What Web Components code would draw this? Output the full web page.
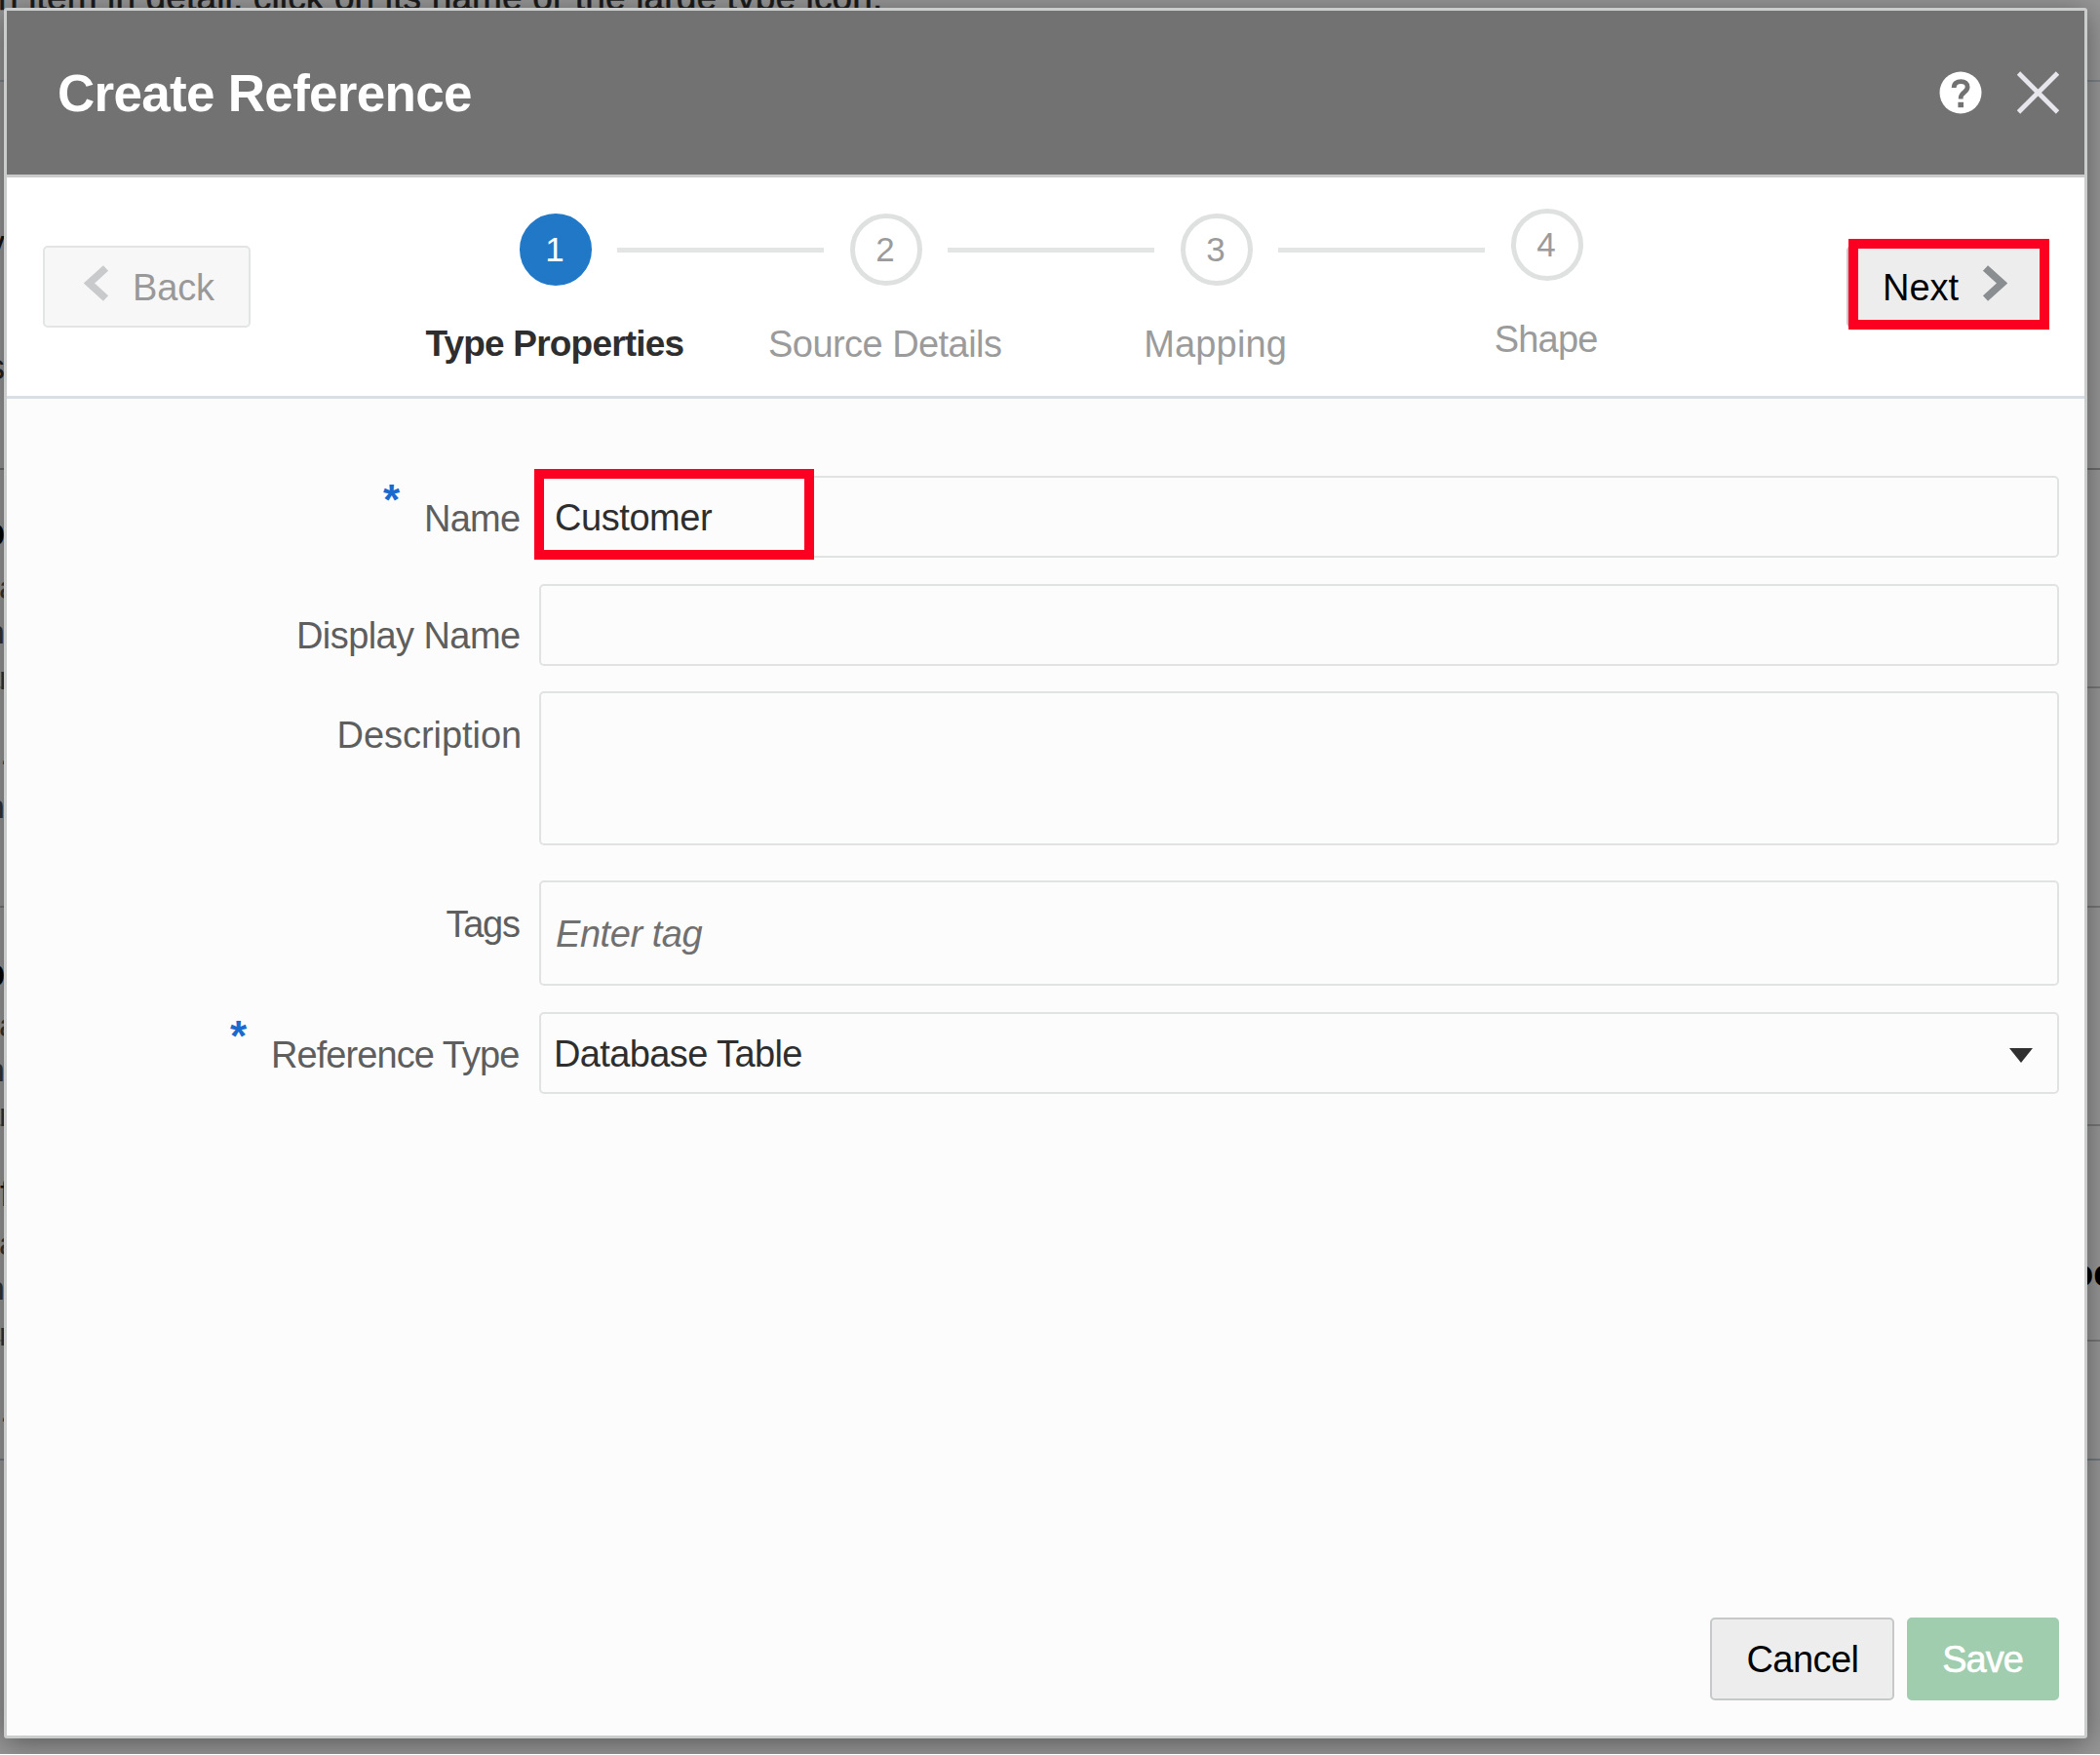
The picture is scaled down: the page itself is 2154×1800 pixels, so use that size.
<!DOCTYPE html>
<html lang="en">
<head>
<meta charset="utf-8">
<title>Create Reference</title>
<style>
html,body{margin:0;background:#fff;overflow:hidden}
body{font-family:"Liberation Sans",Arial,sans-serif;font-size:38px;line-height:44px;color:#5e5e5e}
</style>
</head>
<body>
<create-reference-page></create-reference-page>
<script>
const define = (name, html, setup) => customElements.define(name, class extends HTMLElement {
  connectedCallback() {
    if (this.shadowRoot) return;
    this.attachShadow({mode: 'open'}).innerHTML = typeof html === 'function' ? html(this) : html;
    if (setup) setup(this);
  }
});

// A single line of text whose box is its ink box; tracking is adjusted to the given width.
define('fit-text', '<style>:host{display:inline-block;white-space:pre;line-height:46px;height:44px;flex:none;text-align:left}span{display:block}</style><span></span>', el => {
  const span = el.shadowRoot.querySelector('span'), text = el.getAttribute('text');
  span.textContent = text;
  const cs = getComputedStyle(el), ctx = document.createElement('canvas').getContext('2d');
  ctx.font = `${cs.fontStyle} ${cs.fontWeight} ${cs.fontSize} ${cs.fontFamily}`;
  const m = ctx.measureText(text), w = +el.getAttribute('w');
  const ink = m.actualBoundingBoxRight + m.actualBoundingBoxLeft;
  if (text.length > 1) span.style.letterSpacing = ((w - ink) / (text.length - 1)).toFixed(3) + 'px';
  span.style.marginLeft = m.actualBoundingBoxLeft + 'px';
  el.style.width = w + 'px';
});

define('dimmed-page', () => {
  const rules = [[82,'#7a8288'],[480,'#6c6c6c'],[704,'#777'],[929,'#777'],[1153,'#777'],[1374,'#777'],[1496,'#727a80']];
  const bits = [['y',-14,263,38,0,'#111'],['s',-13,389,36,0,'#222'],['p',-18,559,38,1,'#000'],['a',-1,614,34,0,'#333'],['n',-14,660,34,0,'#333'],['r',-1,707,34,0,'#333'],['.',0,784,34,0,'#333'],
    ['n',-14,839,34,0,'#333'],['p',-18,1011,38,1,'#000'],['a',-1,1063,34,0,'#333'],['n',-14,1109,34,0,'#333'],['r',-1,1155,34,0,'#333'],['f',0,1237,38,0,'#111'],['a',-1,1287,34,0,'#333'],['n',-14,1333,34,0,'#333'],['r',-1,1380,34,0,'#333'],['.',0,1458,34,0,'#333'],
    ['oc',2124,1319,38,1,'#000']];
  return `<style>:host{display:block;position:relative;width:2154px;height:1799px;background:#979797;overflow:hidden}
  i,b{position:absolute;font-style:normal;font-weight:normal}i{left:0;right:0;height:2px}b{line-height:40px;white-space:nowrap}
  fit-text{position:absolute;left:0;top:-25px;font-size:37px;color:#1b1b1b;-webkit-text-stroke:.5px #1b1b1b}</style>
  ${rules.map(r => `<i style="top:${r[0]}px;background:${r[1]}"></i>`).join('')}
  ${bits.map(([t,x,y,s,w,c]) => `<b style="left:${x}px;top:${y-20-Math.round(s*.3465)}px;font-size:${s}px;font-weight:${w?700:400};color:${c}">${t}</b>`).join('')}
  <fit-text text="n item in detail, click on its name or the large type icon." w="902"></fit-text><slot></slot>`;
});

define('dialog-header', `<style>:host{display:flex;height:168px;background:#727272;border-bottom:3px solid #cbcbcb;color:#fff;align-items:center;padding:0 26px 0 54px;flex:none}
fit-text{font-size:53px;font-weight:700}
svg{display:block;flex:none}.q{margin-left:auto;margin-right:36px}</style>
<fit-text text="Create Reference" w="422"></fit-text>
<svg class="q" width="44" height="44" viewBox="0 0 44 44"><circle cx="22" cy="22" r="21.5" fill="#fff"/><path d="M15.2 17c0-4.3 2.9-6.4 7.1-6.4s6.8 2.2 6.8 5.7c0 5.3-6.9 5.2-6.9 11v1.2" fill="none" stroke="#727272" stroke-width="4.8"/><rect x="19.4" y="31.8" width="5.6" height="5.4" fill="#727272"/></svg>
<svg width="43" height="44" viewBox="0 0 43 44"><path d="M1.5 2 41.5 42M41.5 2 1.5 42" stroke="#e6e6ec" stroke-width="4.8"/></svg>`);

define('push-button', `<style>:host{display:flex;box-sizing:border-box;height:84px;border:2px solid var(--edge,#c6c9ca);border-radius:5px;background:var(--fill,#ededed);color:#000;position:relative;flex:none;align-items:flex-start}</style><slot></slot>`);

define('chevron-icon', el => `<style>:host{display:block;flex:none}svg{display:block}</style><svg width="26" height="37" viewBox="0 0 26 37"><path d="${el.hasAttribute('left') ? 'M22.5 3 5.5 18.5 22.5 34' : 'M3.5 3 20.5 18.5 3.5 34'}" fill="none" stroke="currentColor" stroke-width="7.6"/></svg>`);

define('highlight-box', `<style>:host{display:block;position:absolute;box-sizing:border-box;border:10px solid #fb0020;height:93px}</style>`);

define('step-train', () => {
  const steps = [['Type Properties',265],['Source Details',238],['Mapping',141.5],['Shape',104.5]];
  return `<style>:host{display:block;width:1356px;color:#9b9b9b;flex:none}
  .track{display:flex;padding:31.5px 0 0 132.5px;height:78.5px}
  .dot{box-sizing:border-box;width:74px;height:74px;margin-top:5px;border:5px solid #dfe1e0;border-radius:50%;display:flex;align-items:center;justify-content:center;font-size:35px;padding-right:2px;flex:none}
  .dot.on{background:#2078c6;border-color:#2078c6;color:#fff}
  .bar{width:212px;height:5px;background:#e3e5e4;margin:40px 27px 0 26px;flex:none}
  .names{display:flex;margin:33px 0 0 -1px}.names div{width:339px;display:flex;justify-content:center;padding-top:5px}
  .names div:first-child{color:#2e2e2e;font-weight:700;font-size:37px}.names div:last-child{padding-top:0}.dot:last-child{margin-top:0}</style>
  <div class="track">${steps.map((s,i) => `${i ? '<div class="bar"></div>' : ''}<div class="dot${i ? '' : ' on'}">${i+1}</div>`).join('')}</div>
  <div class="names">${steps.map(s => `<div><fit-text text="${s[0]}" w="${s[1]}"></fit-text></div>`).join('')}</div>`;
});

define('wizard-bar', `<style>:host{display:flex;height:224px;background:#fff;border-bottom:3px solid #d7e0e7;align-items:flex-start;padding-left:37px;flex:none}
.back{width:213px;margin:70px 143.5px 0 0;--fill:#f7f7f7;--edge:#e2e5e4}.back chevron-icon{margin:18px 27px 0 40px;color:#c8cacb}.back fit-text{margin-top:18px;color:#999}
.next{width:207px;margin:70px 0 0 137.5px}.next fit-text{margin:18px 23px 0 38px}.next chevron-icon{margin-top:18px;color:#8a8e90}
highlight-box{left:0;top:-9px;width:206px}</style>
<push-button class="back"><chevron-icon left></chevron-icon><fit-text text="Back" w="82"></fit-text></push-button>
<step-train></step-train>
<push-button class="next"><fit-text text="Next" w="75.5"></fit-text><chevron-icon></chevron-icon><highlight-box></highlight-box></push-button>`);

define('form-row', el => {
  const a = n => el.getAttribute(n);
  return `<style>:host{display:flex;gap:20px;height:${a('h')}px;margin-bottom:${a('gap')}px}
  .label{width:526px;display:flex;justify-content:flex-end;padding-top:${a('lt')}px;box-sizing:border-box;flex:none}
  .star{color:#1a69cf;font-size:44px;font-weight:700;margin:-19px 30px 0 0}
  .box{flex:1;box-sizing:border-box;border:2px solid #e1e3e3;border-radius:5px;position:relative;display:flex;justify-content:space-between;padding:0 25px 0 15px;color:#2e2e2e}</style>
  <div class="label">${el.hasAttribute('required') ? '<fit-text class="star" text="*" w="15"></fit-text>' : ''}<fit-text text="${a('label')}" w="${a('lw')}"></fit-text></div><div class="box"><slot></slot></div>`;
});

define('reference-form', `<style>:host{display:block;flex:1;padding:79px 26px 0 0}
fit-text{margin-top:18px}.tag{margin-top:30px;margin-left:1px;font-style:italic;color:#707070}.db{margin-left:1px}
highlight-box{left:-7px;top:-9px;width:287px}svg{margin-top:35px;display:block}</style>
<form-row required label="Name" lw="95" lt="21" h="84" gap="27"><fit-text text="Customer" w="161"></fit-text><highlight-box></highlight-box></form-row>
<form-row label="Display Name" lw="226" lt="30" h="84" gap="26"></form-row>
<form-row label="Description" lw="184.5" lt="22" h="158" gap="36"></form-row>
<form-row label="Tags" lw="75.5" lt="22" h="108" gap="27"><fit-text class="tag" text="Enter tag" w="149.5"></fit-text></form-row>
<form-row required label="Reference Type" lw="252" lt="21" h="84" gap="0"><fit-text class="db" text="Database Table" w="252"></fit-text><svg width="24" height="15" viewBox="0 0 24 15"><path d="M0 0H24L12 15Z" fill="#303030"/></svg></form-row>`);

define('dialog-footer', `<style>:host{display:flex;justify-content:flex-end;gap:13px;padding:0 26px 36px 0;flex:none}
push-button{height:85px;justify-content:center}fit-text{margin-top:18px}
.cancel{width:189px}.save{width:156px;--fill:#9fcdae;--edge:#9fcdae}.save fit-text{color:#fff;-webkit-text-stroke:.6px #fff}</style>
<push-button class="cancel"><fit-text text="Cancel" w="112"></fit-text></push-button>
<push-button class="save"><fit-text text="Save" w="81.5"></fit-text></push-button>`);

define('modal-dialog', `<style>:host{position:absolute;left:4px;top:8px;width:2137px;height:1775px;box-sizing:border-box;border:3px solid #cbcccc;border-radius:3px;background:#fcfcfc;display:flex;flex-direction:column;box-shadow:0 5px 30px rgba(0,0,0,.42)}</style><slot></slot>`);

define('create-reference-page', `<style>:host{display:block}</style>
<dimmed-page><modal-dialog><dialog-header></dialog-header><wizard-bar></wizard-bar><reference-form></reference-form><dialog-footer></dialog-footer></modal-dialog></dimmed-page>`);
</script>
</body>
</html>
